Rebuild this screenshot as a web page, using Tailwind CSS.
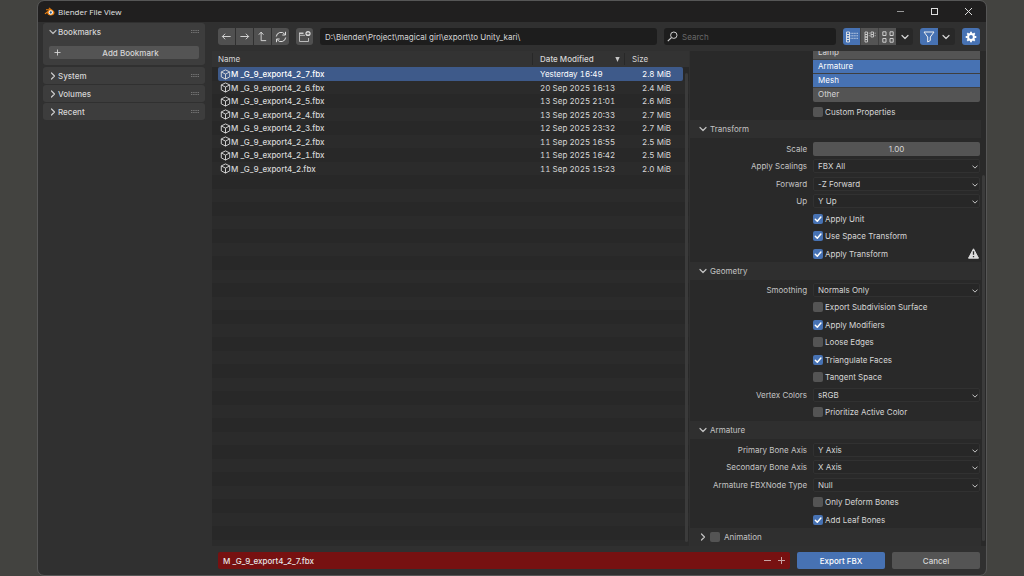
<!DOCTYPE html>
<html lang="en">
<head>
  <meta charset="UTF-8" />
  <meta name="viewport" content="width=device-width, initial-scale=1.0" />
  <title>Blender File View</title>
  <script src="https://cdn.jsdelivr.net/npm/@tailwindcss/browser@4"></script>
</head>
<body class="bg-[#434340] h-screen overflow-hidden font-['Inter',sans-serif] text-[8px] leading-[12px] text-[#d6d6d6] px-[38px] py-px">

  <!-- Shared icons -->
  <svg class="hidden">
    <symbol id="down" viewBox="0 0 8 8"><path d="M1 2.5l3 3 3-3" fill="none" stroke="currentColor" stroke-width="1.2" stroke-linecap="round" stroke-linejoin="round"/></symbol>
    <symbol id="right" viewBox="0 0 8 8"><path d="M2.5 1l3 3-3 3" fill="none" stroke="currentColor" stroke-width="1.2" stroke-linecap="round" stroke-linejoin="round"/></symbol>
    <symbol id="check" viewBox="0 0 10 10"><path d="M2.3 5.2l2 2 3.6-4.2" fill="none" stroke="#fff" stroke-width="1.5" stroke-linecap="round" stroke-linejoin="round"/></symbol>
    <symbol id="grip" viewBox="0 0 8 4"><path d="M0 .5h1.400M2.200 .5h1.400M4.400 .5h1.400M6.600 .5H8M0 2.500h1.400M2.200 2.500h1.400M4.400 2.500h1.400M6.600 2.500H8" stroke="#7a7a7a" stroke-width=".9" fill="none"/></symbol>
    <symbol id="cube" viewBox="0 0 12 12"><path d="M6 1l4.600 2.200v5.400L6 11 1.400 8.600V3.200zM1.400 3.200L6 5.600l4.600-2.400M6 5.600V11" fill="none" stroke="#dcdcdc" stroke-linejoin="round"/></symbol>
  </svg>

  <div class="flex h-full flex-col overflow-hidden rounded-md bg-[#303030] outline outline-[#565656]">

    <!-- Title bar -->
    <header class="flex h-[21px] shrink-0 items-center bg-[#201f1f] pl-[6px] pr-[13px] text-[#e4e4e4]">
      <svg class="mr-[3px] h-[9px] w-[11px]" viewBox="0 0 22 18">
        <path d="M1 13L9.500 6.500H4V4.500h7.500L9 2.500 10.500 1l8 6c5 4 2 10-5 10-4.500 0-7-2.500-7-5.500L3 14.500z" fill="#e87d0d"/>
        <circle cx="13.500" cy="11" r="4.300" fill="#fff"/><circle cx="13.500" cy="11" r="2.300" fill="#265787"/>
      </svg>
      <h1 class="grow font-['Open_Sans',sans-serif] text-[8px] font-medium">Blender File View</h1>
      <div class="flex items-center gap-[25px]">
        <button aria-label="Minimize"><svg class="size-[9px]" viewBox="0 0 9 9"><path d="M1 4.500h7" stroke="#999"/></svg></button>
        <button aria-label="Maximize"><svg class="size-[9px]" viewBox="0 0 9 9"><rect x="1.500" y="1.500" width="6" height="6" fill="none" stroke="#ddd"/></svg></button>
        <button aria-label="Close"><svg class="size-[9px]" viewBox="0 0 9 9"><path d="M1 1l7 7M8 1L1 8" stroke="#ddd"/></svg></button>
      </div>
    </header>

    <div class="flex min-h-0 grow">

      <!-- Sidebar -->
      <aside class="w-[174px] shrink-0 pl-[5px] pr-[7px] pt-px">
        <section class="mb-[2px] h-[42px] rounded-[3px] bg-[#3d3d3d] px-[6px]">
          <h2 class="flex h-[17px] items-center gap-px">
            <svg class="size-[8px] text-[#bbb]"><use href="#down"/></svg>
            <span class="grow font-medium">Bookmarks</span>
            <svg class="h-1 w-2"><use href="#grip"/></svg>
          </h2>
          <button class="mt-[6px] flex h-[13px] w-full items-center rounded-[2px] bg-[#545454] px-[5px]">
            <svg class="size-[7px]" viewBox="0 0 7 7"><path d="M3.500 .5v6M.5 3.500h6" stroke="#d6d6d6" stroke-width=".9"/></svg>
            <span class="grow pl-[6px] font-medium">Add Bookmark</span>
          </button>
        </section>
        <div class="flex flex-col gap-px">
          <h2 class="flex h-[17px] items-center gap-px rounded-[3px] bg-[#3d3d3d] px-[6px]">
            <svg class="size-[8px] text-[#ccc]"><use href="#right"/></svg>
            <span class="grow font-medium">System</span>
            <svg class="h-1 w-2"><use href="#grip"/></svg>
          </h2>
          <h2 class="flex h-[17px] items-center gap-px rounded-[3px] bg-[#3d3d3d] px-[6px]">
            <svg class="size-[8px] text-[#ccc]"><use href="#right"/></svg>
            <span class="grow font-medium">Volumes</span>
            <svg class="h-1 w-2"><use href="#grip"/></svg>
          </h2>
          <h2 class="flex h-[17px] items-center gap-px rounded-[3px] bg-[#3d3d3d] px-[6px]">
            <svg class="size-[8px] text-[#ccc]"><use href="#right"/></svg>
            <span class="grow font-medium">Recent</span>
            <svg class="h-1 w-2"><use href="#grip"/></svg>
          </h2>
        </div>
      </aside>

      <main class="flex min-w-0 grow flex-col">

        <!-- Toolbar -->
        <nav class="flex h-[29px] shrink-0 items-center gap-[7px] px-[6px]">
          <div class="flex h-[17px] w-[71px] shrink-0 gap-px overflow-hidden rounded-[3px]">
            <button class="flex flex-1 items-center justify-center bg-[#505050]" aria-label="Back"><svg class="size-[11px]" viewBox="0 0 12 12"><path d="M10.500 6h-9M4.500 3l-3 3 3 3" fill="none" stroke="#ddd"/></svg></button>
            <button class="flex flex-1 items-center justify-center bg-[#505050]" aria-label="Forward"><svg class="size-[11px]" viewBox="0 0 12 12"><path d="M1.500 6h9M7.500 3l3 3-3 3" fill="none" stroke="#ddd"/></svg></button>
            <button class="flex flex-1 items-center justify-center bg-[#505050]" aria-label="Parent directory"><svg class="size-[11px]" viewBox="0 0 12 12"><path d="M2 4l2.500-2.800L7 4M4.500 1.500v9H10" fill="none" stroke="#ddd"/></svg></button>
            <button class="flex flex-1 items-center justify-center bg-[#505050]" aria-label="Refresh"><svg class="size-[12px]" viewBox="0 0 12 12"><path d="M1.300 5.500a4.700 4.700 0 0 1 8.500-2.200M10.700 6.500a4.700 4.700 0 0 1-8.500 2.200M10.500 .8v3.200H7.300M1.500 11.200V8h3.200" fill="none" stroke="#ddd"/></svg></button>
          </div>
          <button class="flex h-[17px] w-[17px] shrink-0 items-center justify-center rounded-[3px] bg-[#505050]" aria-label="New folder">
            <svg class="size-[13px]" viewBox="0 0 13 13"><path d="M1 2.500h4.500V4H1z" fill="#ccc"/><path d="M1.500 4v7.500h9V8M1.500 5.300H7" fill="none" stroke="#bbb"/><circle cx="10" cy="3.500" r="2.600" fill="#ddd"/><path d="M10 2v3M8.500 3.500h3" stroke="#505050" stroke-width=".8"/></svg>
          </button>
          <input type="text" aria-label="Directory" value="D:\Blender\Project\magical girl\export\to Unity_kari\" class="h-[17px] min-w-0 grow rounded-[3px] bg-[#1d1d1d] px-[5px] outline-none" />
          <div class="relative w-[172px] shrink-0">
            <svg class="absolute left-[3px] top-[3px] size-[11px]" viewBox="0 0 11 11"><circle cx="6.800" cy="4.200" r="3.200" fill="none" stroke="#d0d0d0"/><path d="M4.400 6.600L.8 10.200" stroke="#d0d0d0" stroke-width="1.200"/></svg>
            <input type="search" aria-label="Search" placeholder="Search" class="h-[17px] w-full rounded-[3px] bg-[#1d1d1d] pl-[18px] outline-none placeholder:text-[#686868]" />
          </div>
          <div class="flex h-[17px] w-[70px] shrink-0 overflow-hidden rounded-[3px]">
            <button class="flex flex-1 items-center justify-center bg-[#4772b3]" aria-label="Vertical list"><svg class="size-[12px]" viewBox="0 0 12 12"><path d="M.5 1h3v2.500h-3zM.5 3.500h3V6h-3zM.5 6h3v2.500h-3zM.5 8.500h3V11h-3z" fill="none" stroke="#e8e8e8" stroke-width=".9"/><path d="M4.500 2.300H12M4.500 4.800H12M4.500 7.300H12" stroke="#d5dfee" stroke-width=".8" stroke-dasharray="1.200 .4"/></svg></button>
            <button class="flex flex-1 items-center justify-center border-l border-[#404040] bg-[#545454]" aria-label="Horizontal list"><svg class="size-[12px]" viewBox="0 0 12 12"><path d="M1 1h2.500v2.500H1zM1 3.500h2.500V6H1zM1 6h2.500v2.500H1zM1 8.500h2.500V11H1zM7 1h2.500v2.500H7zM7 3.500h2.500V6H7z" fill="none" stroke="#ccc" stroke-width=".9"/><path d="M4.500 2.200h1.500M4.500 4.700h1.500M10.500 2.200H12M10.500 4.700H12" stroke="#aaa" stroke-width=".8"/></svg></button>
            <button class="flex flex-1 items-center justify-center border-l border-[#404040] bg-[#545454]" aria-label="Thumbnails"><svg class="size-[12px]" viewBox="0 0 12 12"><path d="M.8 .8h3.200V4.500H.8zM8 .8h3.200V4.500H8zM.8 7.500h3.200v3.700H.8zM8 7.500h3.200v3.700H8z" fill="none" stroke="#ccc"/></svg></button>
            <button class="flex flex-1 items-center justify-center bg-[#282828]" aria-label="Display settings"><svg class="size-[8px]"><use href="#down"/></svg></button>
          </div>
          <div class="flex h-[17px] w-[35px] shrink-0 overflow-hidden rounded-[3px]">
            <button class="flex flex-1 items-center justify-center bg-[#4772b3]" aria-label="Filter"><svg class="size-[12px]" viewBox="0 0 12 12"><path d="M1 1h10L7.300 6v3.500L4.700 11V6z" fill="none" stroke="#f0f0f0" stroke-linejoin="round"/></svg></button>
            <button class="flex flex-1 items-center justify-center bg-[#282828]" aria-label="Filter settings"><svg class="size-[8px]"><use href="#down"/></svg></button>
          </div>
          <button class="flex h-[17px] w-[18px] shrink-0 items-center justify-center rounded-[3px] bg-[#4772b3]" aria-label="Toggle options">
            <svg class="size-[12px]" viewBox="0 0 12 12"><circle cx="6" cy="6" r="2.900" fill="none" stroke="#fff" stroke-width="2"/><path d="M6 .7v2M6 9.300v2M.7 6h2M9.300 6h2M2.250 2.250l1.400 1.400M8.350 8.350l1.400 1.400M2.250 9.750l1.400-1.400M8.350 3.650l1.400-1.400" stroke="#fff" stroke-width="1.800"/></svg>
          </button>
        </nav>

        <div class="flex min-h-0 grow">

          <!-- File list -->
          <section class="flex min-w-0 grow overflow-hidden bg-[linear-gradient(#333333_16px,transparent_16px),linear-gradient(#282828_14px,#2b2b2b_14px)] bg-[length:100%_100%,100%_27px] bg-[position:0_0,0_16px] pl-[6px]">
            <div class="min-w-0 grow">
              <table class="w-full table-fixed border-separate border-spacing-0 text-left">
                <colgroup><col /><col class="w-[92px]" /><col class="w-[58px]" /></colgroup>
                <thead>
                  <tr class="h-[16px]">
                    <th class="p-0 font-normal"><div class="border-r border-[#282828] leading-[12px]">Name</div></th>
                    <th class="p-0 font-medium"><div class="flex items-center justify-between border-r border-[#282828] pl-[7px] pr-1">Date Modified <svg class="h-[5px] w-[5px]" viewBox="0 0 5 5"><path d="M.3 0h4.400L2.500 5z" fill="#c6c6c6"/></svg></div></th>
                    <th class="p-0 pl-[7px] font-normal">Size</th>
                  </tr>
                </thead>
                <tbody class="tabular-nums">
                  <tr class="odd:h-[14px] even:h-[13px] text-white">
                    <td class="rounded-l-[2px] bg-[#3e5a8a] p-0"><div class="flex items-center pl-[2px] font-medium"><svg class="size-[11px]"><use href="#cube"/></svg>M _G_9_export4_2_7.fbx</div></td>
                    <td class="bg-[#3e5a8a] p-0 pl-[7px]">Yesterday 16:49</td>
                    <td class="rounded-r-[2px] bg-[#3e5a8a] p-0 pr-[12px] text-right">2.8 MiB</td>
                  </tr>
                  <tr class="odd:h-[14px] even:h-[13px]">
                    <td class="p-0"><div class="flex items-center pl-[2px] font-medium"><svg class="size-[11px]"><use href="#cube"/></svg>M _G_9_export4_2_6.fbx</div></td>
                    <td class="p-0 pl-[7px]">20 Sep 2025 16:13</td>
                    <td class="p-0 pr-[12px] text-right">2.4 MiB</td>
                  </tr>
                  <tr class="odd:h-[14px] even:h-[13px]">
                    <td class="p-0"><div class="flex items-center pl-[2px] font-medium"><svg class="size-[11px]"><use href="#cube"/></svg>M _G_9_export4_2_5.fbx</div></td>
                    <td class="p-0 pl-[7px]">13 Sep 2025 21:01</td>
                    <td class="p-0 pr-[12px] text-right">2.6 MiB</td>
                  </tr>
                  <tr class="odd:h-[14px] even:h-[13px]">
                    <td class="p-0"><div class="flex items-center pl-[2px] font-medium"><svg class="size-[11px]"><use href="#cube"/></svg>M _G_9_export4_2_4.fbx</div></td>
                    <td class="p-0 pl-[7px]">13 Sep 2025 20:33</td>
                    <td class="p-0 pr-[12px] text-right">2.7 MiB</td>
                  </tr>
                  <tr class="odd:h-[14px] even:h-[13px]">
                    <td class="p-0"><div class="flex items-center pl-[2px] font-medium"><svg class="size-[11px]"><use href="#cube"/></svg>M _G_9_export4_2_3.fbx</div></td>
                    <td class="p-0 pl-[7px]">12 Sep 2025 23:32</td>
                    <td class="p-0 pr-[12px] text-right">2.7 MiB</td>
                  </tr>
                  <tr class="odd:h-[14px] even:h-[13px]">
                    <td class="p-0"><div class="flex items-center pl-[2px] font-medium"><svg class="size-[11px]"><use href="#cube"/></svg>M _G_9_export4_2_2.fbx</div></td>
                    <td class="p-0 pl-[7px]">11 Sep 2025 16:55</td>
                    <td class="p-0 pr-[12px] text-right">2.5 MiB</td>
                  </tr>
                  <tr class="odd:h-[14px] even:h-[13px]">
                    <td class="p-0"><div class="flex items-center pl-[2px] font-medium"><svg class="size-[11px]"><use href="#cube"/></svg>M _G_9_export4_2_1.fbx</div></td>
                    <td class="p-0 pl-[7px]">11 Sep 2025 16:42</td>
                    <td class="p-0 pr-[12px] text-right">2.5 MiB</td>
                  </tr>
                  <tr class="odd:h-[14px] even:h-[13px]">
                    <td class="p-0"><div class="flex items-center pl-[2px] font-medium"><svg class="size-[11px]"><use href="#cube"/></svg>M _G_9_export4_2.fbx</div></td>
                    <td class="p-0 pl-[7px]">11 Sep 2025 15:23</td>
                    <td class="p-0 pr-[12px] text-right">2.0 MiB</td>
                  </tr>
                </tbody>
              </table>
            </div>
            <!-- Scrollbar -->
            <div class="flex w-[6px] shrink-0 pb-1 pl-[2px] pt-[22px]"><div class="w-[3px] rounded-full bg-[#3b3b3b]"></div></div>
          </section>

          <!-- Export options -->
          <section class="flex w-[297px] shrink-0 overflow-hidden border-l border-[#303030] bg-[#292929]">
            <form class="min-w-0 grow">
              <div class="-mt-[5px] ml-[123px] mr-px">
                <ul class="divide-y divide-[#3f3f3f] overflow-hidden rounded-[2px] leading-[13px]">
                  <li class="h-[14px] bg-[#545454] pl-[5px]">Lamp</li>
                  <li class="h-[14px] bg-[#4772b3] pl-[5px] text-white">Armature</li>
                  <li class="h-[14px] bg-[#4772b3] pl-[5px] text-white">Mesh</li>
                  <li class="h-[14px] bg-[#545454] pl-[5px]">Other</li>
                </ul>
                <label class="flex h-[18px] items-center gap-[2px] pt-px">
                  <span class="grid"><input type="checkbox" class="peer size-[10px] appearance-none rounded-[2px] bg-[#545454] checked:bg-[#4772b3] [grid-area:1/1]" /><svg class="hidden size-[10px] peer-checked:block [grid-area:1/1]"><use href="#check"/></svg></span>
                  Custom Properties
                </label>
              </div>

              <!-- Transform -->
              <h2 class="flex h-[18px] items-center gap-[3px] bg-[#2f2f2f] pl-[9px] text-[#c4c4c4]"><svg class="size-[8px]"><use href="#down"/></svg>Transform</h2>
              <div class="pr-px pt-[2px]">
                <div class="flex items-center gap-[6px] odd:h-[17px] even:h-[18px]">
                  <label for="scale" class="w-[117px] shrink-0 text-right text-[#c4c4c4]">Scale</label>
                  <input id="scale" type="text" value="1.00" class="h-[14px] min-w-0 grow rounded-[2px] bg-[#545454] text-center outline-none" />
                </div>
                <div class="flex items-center gap-[6px] odd:h-[17px] even:h-[18px]">
                  <label for="scalings" class="w-[117px] shrink-0 text-right text-[#c4c4c4]">Apply Scalings</label>
                  <div class="relative grow"><select id="scalings" class="block h-[14px] w-full appearance-none rounded-[2px] border border-[#313131] bg-[#272727] pl-1"><option>FBX All</option></select><svg class="pointer-events-none absolute right-[2px] top-[5px] size-[6px]"><use href="#down"/></svg></div>
                </div>
                <div class="flex items-center gap-[6px] odd:h-[17px] even:h-[18px]">
                  <label for="forward" class="w-[117px] shrink-0 text-right text-[#c4c4c4]">Forward</label>
                  <div class="relative grow"><select id="forward" class="block h-[14px] w-full appearance-none rounded-[2px] border border-[#313131] bg-[#272727] pl-1"><option>-Z Forward</option></select><svg class="pointer-events-none absolute right-[2px] top-[5px] size-[6px]"><use href="#down"/></svg></div>
                </div>
                <div class="flex items-center gap-[6px] odd:h-[17px] even:h-[18px]">
                  <label for="up" class="w-[117px] shrink-0 text-right text-[#c4c4c4]">Up</label>
                  <div class="relative grow"><select id="up" class="block h-[14px] w-full appearance-none rounded-[2px] border border-[#313131] bg-[#272727] pl-1"><option>Y Up</option></select><svg class="pointer-events-none absolute right-[2px] top-[5px] size-[6px]"><use href="#down"/></svg></div>
                </div>
                <label class="flex items-center gap-[2px] pl-[123px] odd:h-[17px] even:h-[18px]">
                  <span class="grid"><input type="checkbox" checked class="peer size-[10px] appearance-none rounded-[2px] bg-[#545454] checked:bg-[#4772b3] [grid-area:1/1]" /><svg class="hidden size-[10px] peer-checked:block [grid-area:1/1]"><use href="#check"/></svg></span>
                  Apply Unit
                </label>
                <label class="flex items-center gap-[2px] pl-[123px] odd:h-[17px] even:h-[18px]">
                  <span class="grid"><input type="checkbox" checked class="peer size-[10px] appearance-none rounded-[2px] bg-[#545454] checked:bg-[#4772b3] [grid-area:1/1]" /><svg class="hidden size-[10px] peer-checked:block [grid-area:1/1]"><use href="#check"/></svg></span>
                  Use Space Transform
                </label>
                <label class="flex items-center gap-[2px] pl-[123px] odd:h-[17px] even:h-[18px]">
                  <span class="grid"><input type="checkbox" checked class="peer size-[10px] appearance-none rounded-[2px] bg-[#545454] checked:bg-[#4772b3] [grid-area:1/1]" /><svg class="hidden size-[10px] peer-checked:block [grid-area:1/1]"><use href="#check"/></svg></span>
                  <span class="grow">Apply Transform</span>
                  <svg class="mr-px size-[11px]" viewBox="0 0 11 11"><path d="M5.500 .8L10.500 10.200H.5z" fill="#dcdcdc" stroke="#dcdcdc" stroke-linejoin="round"/><path d="M5.500 3.200v3.600M5.500 7.900v1.300" stroke="#292929" stroke-width="1.300"/></svg>
                </label>
              </div>

              <!-- Geometry -->
              <h2 class="flex h-[18px] items-center gap-[3px] bg-[#2f2f2f] pl-[9px] text-[#c4c4c4]"><svg class="size-[8px]"><use href="#down"/></svg>Geometry</h2>
              <div class="pr-px pt-px">
                <div class="flex items-center gap-[6px] odd:h-[17px] even:h-[18px]">
                  <label for="smoothing" class="w-[117px] shrink-0 text-right text-[#c4c4c4]">Smoothing</label>
                  <div class="relative grow"><select id="smoothing" class="block h-[14px] w-full appearance-none rounded-[2px] border border-[#313131] bg-[#272727] pl-1"><option>Normals Only</option></select><svg class="pointer-events-none absolute right-[2px] top-[5px] size-[6px]"><use href="#down"/></svg></div>
                </div>
                <label class="flex items-center gap-[2px] pl-[123px] odd:h-[17px] even:h-[18px]">
                  <span class="grid"><input type="checkbox" class="peer size-[10px] appearance-none rounded-[2px] bg-[#545454] checked:bg-[#4772b3] [grid-area:1/1]" /><svg class="hidden size-[10px] peer-checked:block [grid-area:1/1]"><use href="#check"/></svg></span>
                  Export Subdivision Surface
                </label>
                <label class="flex items-center gap-[2px] pl-[123px] odd:h-[17px] even:h-[18px]">
                  <span class="grid"><input type="checkbox" checked class="peer size-[10px] appearance-none rounded-[2px] bg-[#545454] checked:bg-[#4772b3] [grid-area:1/1]" /><svg class="hidden size-[10px] peer-checked:block [grid-area:1/1]"><use href="#check"/></svg></span>
                  Apply Modifiers
                </label>
                <label class="flex items-center gap-[2px] pl-[123px] odd:h-[17px] even:h-[18px]">
                  <span class="grid"><input type="checkbox" class="peer size-[10px] appearance-none rounded-[2px] bg-[#545454] checked:bg-[#4772b3] [grid-area:1/1]" /><svg class="hidden size-[10px] peer-checked:block [grid-area:1/1]"><use href="#check"/></svg></span>
                  Loose Edges
                </label>
                <label class="flex items-center gap-[2px] pl-[123px] odd:h-[17px] even:h-[18px]">
                  <span class="grid"><input type="checkbox" checked class="peer size-[10px] appearance-none rounded-[2px] bg-[#545454] checked:bg-[#4772b3] [grid-area:1/1]" /><svg class="hidden size-[10px] peer-checked:block [grid-area:1/1]"><use href="#check"/></svg></span>
                  Triangulate Faces
                </label>
                <label class="flex items-center gap-[2px] pl-[123px] odd:h-[17px] even:h-[18px]">
                  <span class="grid"><input type="checkbox" class="peer size-[10px] appearance-none rounded-[2px] bg-[#545454] checked:bg-[#4772b3] [grid-area:1/1]" /><svg class="hidden size-[10px] peer-checked:block [grid-area:1/1]"><use href="#check"/></svg></span>
                  Tangent Space
                </label>
                <div class="flex items-center gap-[6px] odd:h-[17px] even:h-[18px]">
                  <label for="colors" class="w-[117px] shrink-0 text-right text-[#c4c4c4]">Vertex Colors</label>
                  <div class="relative grow"><select id="colors" class="block h-[14px] w-full appearance-none rounded-[2px] border border-[#313131] bg-[#272727] pl-1"><option>sRGB</option></select><svg class="pointer-events-none absolute right-[2px] top-[5px] size-[6px]"><use href="#down"/></svg></div>
                </div>
                <label class="flex items-center gap-[2px] pl-[123px] odd:h-[17px] even:h-[18px]">
                  <span class="grid"><input type="checkbox" class="peer size-[10px] appearance-none rounded-[2px] bg-[#545454] checked:bg-[#4772b3] [grid-area:1/1]" /><svg class="hidden size-[10px] peer-checked:block [grid-area:1/1]"><use href="#check"/></svg></span>
                  Prioritize Active Color
                </label>
              </div>

              <!-- Armature -->
              <h2 class="flex h-[18px] items-center gap-[3px] bg-[#2f2f2f] pl-[9px] text-[#c4c4c4]"><svg class="size-[8px]"><use href="#down"/></svg>Armature</h2>
              <div class="pr-px pt-[2px]">
                <div class="flex items-center gap-[6px] odd:h-[17px] even:h-[18px]">
                  <label for="primary" class="w-[117px] shrink-0 text-right text-[#c4c4c4]">Primary Bone Axis</label>
                  <div class="relative grow"><select id="primary" class="block h-[14px] w-full appearance-none rounded-[2px] border border-[#313131] bg-[#272727] pl-1"><option>Y Axis</option></select><svg class="pointer-events-none absolute right-[2px] top-[5px] size-[6px]"><use href="#down"/></svg></div>
                </div>
                <div class="flex items-center gap-[6px] odd:h-[17px] even:h-[18px]">
                  <label for="secondary" class="w-[117px] shrink-0 text-right text-[#c4c4c4]">Secondary Bone Axis</label>
                  <div class="relative grow"><select id="secondary" class="block h-[14px] w-full appearance-none rounded-[2px] border border-[#313131] bg-[#272727] pl-1"><option>X Axis</option></select><svg class="pointer-events-none absolute right-[2px] top-[5px] size-[6px]"><use href="#down"/></svg></div>
                </div>
                <div class="flex items-center gap-[6px] odd:h-[17px] even:h-[18px]">
                  <label for="nodetype" class="w-[117px] shrink-0 text-right text-[#c4c4c4]">Armature FBXNode Type</label>
                  <div class="relative grow"><select id="nodetype" class="block h-[14px] w-full appearance-none rounded-[2px] border border-[#313131] bg-[#272727] pl-1"><option>Null</option></select><svg class="pointer-events-none absolute right-[2px] top-[5px] size-[6px]"><use href="#down"/></svg></div>
                </div>
                <label class="flex items-center gap-[2px] pl-[123px] odd:h-[17px] even:h-[18px]">
                  <span class="grid"><input type="checkbox" class="peer size-[10px] appearance-none rounded-[2px] bg-[#545454] checked:bg-[#4772b3] [grid-area:1/1]" /><svg class="hidden size-[10px] peer-checked:block [grid-area:1/1]"><use href="#check"/></svg></span>
                  Only Deform Bones
                </label>
                <label class="flex items-center gap-[2px] pl-[123px] odd:h-[17px] even:h-[18px]">
                  <span class="grid"><input type="checkbox" checked class="peer size-[10px] appearance-none rounded-[2px] bg-[#545454] checked:bg-[#4772b3] [grid-area:1/1]" /><svg class="hidden size-[10px] peer-checked:block [grid-area:1/1]"><use href="#check"/></svg></span>
                  Add Leaf Bones
                </label>
              </div>

              <!-- Animation -->
              <label class="flex h-[18px] items-center bg-[#2f2f2f] pl-[9px] text-[#c4c4c4]">
                <svg class="mr-[3px] size-[8px]"><use href="#right"/></svg>
                <input type="checkbox" class="mr-1 size-[10px] appearance-none rounded-[2px] bg-[#545454] checked:bg-[#4772b3]" />
                Animation
              </label>
            </form>
            <!-- Scrollbar -->
            <div class="flex w-[5px] shrink-0 pb-[5px] pl-px pt-[124px]"><div class="w-[3px] rounded-full bg-[#3b3b3b]"></div></div>
          </section>
        </div>

        <!-- File name and actions -->
        <footer class="flex h-[29px] shrink-0 items-center gap-[7px] px-[6px]">
          <div class="flex h-[17px] min-w-0 grow items-center gap-[7px] rounded-[2px] bg-[#771111] px-[5px]">
            <input type="text" aria-label="File name" value="M _G_9_export4_2_7.fbx" class="min-w-0 grow bg-transparent font-medium text-[#e6e6e6] outline-none" />
            <button aria-label="Decrement"><svg class="size-[7px]" viewBox="0 0 7 7"><path d="M0 3.500h7" stroke="#c9a5a5"/></svg></button>
            <button aria-label="Increment"><svg class="size-[7px]" viewBox="0 0 7 7"><path d="M0 3.500h7M3.500 0v7" stroke="#c9a5a5"/></svg></button>
          </div>
          <button class="h-[17px] w-[88px] shrink-0 rounded-[2px] bg-[#4772b3] font-medium text-white">Export FBX</button>
          <button class="h-[17px] w-[88px] shrink-0 rounded-[2px] bg-[#545454] font-medium">Cancel</button>
        </footer>
      </main>
    </div>
  </div>
</body>
</html>
